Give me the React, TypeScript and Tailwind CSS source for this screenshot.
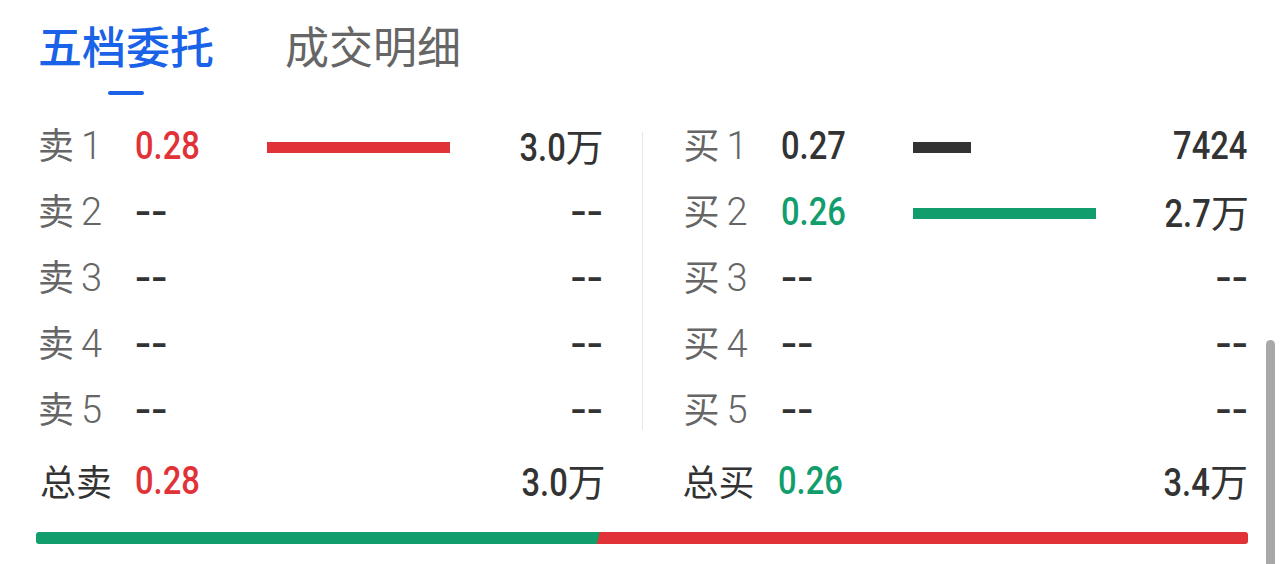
const RED = "text-[#e03237]";
const GREEN = "text-[#129e6c]";
const DARK = "text-[#333333]";

type Row = {
  label: string;
  level: string;
  price: string;
  priceColor: string;
  bar: number;
  barColor: string;
  vol: string;
  unit?: string;
};

const sells: Row[] = [
  { label: "卖", level: "1", price: "0.28", priceColor: RED, bar: 183, barColor: "bg-[#e03237]", vol: "3.0", unit: "万" },
  { label: "卖", level: "2", price: "--", priceColor: DARK, bar: 0, barColor: "", vol: "--" },
  { label: "卖", level: "3", price: "--", priceColor: DARK, bar: 0, barColor: "", vol: "--" },
  { label: "卖", level: "4", price: "--", priceColor: DARK, bar: 0, barColor: "", vol: "--" },
  { label: "卖", level: "5", price: "--", priceColor: DARK, bar: 0, barColor: "", vol: "--" },
];

const buys: Row[] = [
  { label: "买", level: "1", price: "0.27", priceColor: DARK, bar: 58, barColor: "bg-[#333333]", vol: "7424" },
  { label: "买", level: "2", price: "0.26", priceColor: GREEN, bar: 183, barColor: "bg-[#129e6c]", vol: "2.7", unit: "万" },
  { label: "买", level: "3", price: "--", priceColor: DARK, bar: 0, barColor: "", vol: "--" },
  { label: "买", level: "4", price: "--", priceColor: DARK, bar: 0, barColor: "", vol: "--" },
  { label: "买", level: "5", price: "--", priceColor: DARK, bar: 0, barColor: "", vol: "--" },
];

const num = "font-['Roboto','Noto_Sans_CJK_SC',sans-serif] text-[38px] leading-none font-medium whitespace-nowrap";
const cjk = "font-['Noto_Sans_CJK_SC',sans-serif]";

// condensed digits: Roboto squeezed horizontally
function Num({ value, right }: { value: string; right?: boolean }) {
  if (value === "--") {
    return (
      <span className={`inline-block scale-x-[1.25] ${right ? "origin-right -mr-[1px]" : "origin-left"}`}>--</span>
    );
  }
  return (
    <span className={`inline-block scale-x-[0.86] ${right ? "origin-right" : "origin-left"}`}>{value}</span>
  );
}

function Unit({ text }: { text?: string }) {
  if (!text) return null;
  return <span className={`font-normal -mr-[2px] ${cjk}`}>{text}</span>;
}

function QuoteRow({ row }: { row: Row }) {
  return (
    <div className="flex items-center h-[66px]">
      <div className="w-[97px] flex items-baseline text-[#666666] mb-[4px]">
        <span className={`text-[36px] leading-none ${cjk}`}>{row.label}</span>
        <span className="ml-[7px] text-[38px] leading-none font-['Roboto',sans-serif] font-light">{row.level}</span>
      </div>
      <div className={`w-[132px] mb-[2px] ${num} ${row.priceColor}`}>
        <Num value={row.price} />
      </div>
      <div className="flex-1 flex items-center">
        {row.bar > 0 && <div className={`h-[11px] ${row.barColor}`} style={{ width: row.bar }} />}
      </div>
      <div className={`mb-[2px] shrink-0 ${num} text-[#333333] text-right`}>
        <Num value={row.vol} right />
        <Unit text={row.unit} />
      </div>
    </div>
  );
}

function TotalRow({ label, price, color, vol }: { label: string; price: string; color: string; vol: string }) {
  return (
    <div className="flex items-center h-[74px]">
      <div className={`w-[95px] mb-[2px] text-[36px] leading-none text-[#333333] ${cjk}`}>{label}</div>
      <div className={`flex-1 ${num} ${color}`}>
        <Num value={price} />
      </div>
      <div className={`shrink-0 ${num} text-[#333333] text-right`}>
        <Num value={vol} right />
        <Unit text="万" />
      </div>
    </div>
  );
}

export default function App() {
  return (
    <div className="relative w-[1284px] h-[564px] bg-white overflow-hidden">
      <div className={`flex pl-[38px] pt-[19px] gap-[71px] h-[114px] ${cjk}`}>
        <div className="flex flex-col items-center">
          <div className="text-[44px] leading-[52px] font-medium text-[#1a62e8]">五档委托</div>
          <div className="mt-[20px] w-[36px] h-[4px] rounded-full bg-[#1a62e8]" />
        </div>
        <div className="text-[44px] leading-[52px] text-[#666666]">成交明细</div>
      </div>

      <div className="flex px-[36px]">
        <div className="flex-1 pl-[2px] pr-[40px]">
          {sells.map((r) => (
            <QuoteRow key={r.label + r.level} row={r} />
          ))}
        </div>
        <div className="w-px bg-[#e6e6e6] mt-[18px] mb-[14px]" />
        <div className="flex-1 pl-[41px] pr-[1px]">
          {buys.map((r) => (
            <QuoteRow key={r.label + r.level} row={r} />
          ))}
        </div>
      </div>

      <div className="flex px-[36px]">
        <div className="flex-1 pl-[4px] pr-[37px]">
          <TotalRow label="总卖" price="0.28" color={RED} vol="3.0" />
        </div>
        <div className="w-px" />
        <div className="flex-1 pl-[41px] pr-[2px]">
          <TotalRow label="总买" price="0.26" color={GREEN} vol="3.4" />
        </div>
      </div>

      <div className="mx-[36px] mt-[14px] h-[12px] rounded-[3px] bg-[linear-gradient(105deg,#129e6c_46.4%,#e03237_46.4%)]" />

      {/* scrollbar */}
      <div className="absolute left-[1266px] top-[340px] w-[9px] h-[260px] rounded-full bg-[#a8a8a8]" />
    </div>
  );
}
